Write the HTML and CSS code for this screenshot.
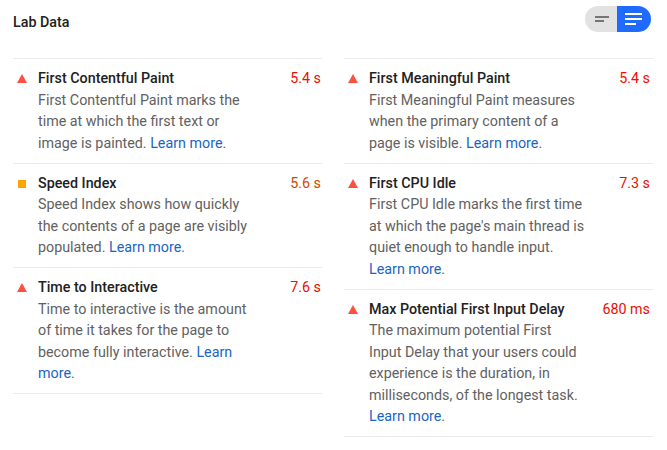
FILE: index.html
```html
<!DOCTYPE html>
<html>
<head>
<meta charset="utf-8">
<link rel="stylesheet" href="styles.css">
</head>
<body>
<div class="panel">
  <div class="header">
    <div class="title">Lab Data</div>
    <div class="toggle">
      <span class="tog tog-off">
        <svg width="14" height="10" viewBox="0 0 14 10"><rect x="0" y="2" width="14" height="2" fill="#757575"/><rect x="0" y="6" width="9" height="2" fill="#757575"/></svg>
      </span>
      <span class="tog tog-on">
        <svg width="17" height="12" viewBox="0 0 17 12"><rect x="0" y="0" width="17" height="2" fill="#fff"/><rect x="0" y="5" width="17" height="2" fill="#fff"/><rect x="0" y="10" width="11" height="2" fill="#fff"/></svg>
      </span>
    </div>
  </div>
  <div class="grid">
    <div class="col">
      <div class="metric">
        <span class="icon tri"></span>
        <div class="body">
          <div class="head"><span class="name">First Contentful Paint</span><span class="val fail">5.4 s</span></div>
          <div class="desc">First Contentful Paint marks the time at which the first text or image is painted. <a href="#">Learn more</a>.</div>
        </div>
      </div>
      <div class="metric">
        <span class="icon sq"></span>
        <div class="body">
          <div class="head"><span class="name">Speed Index</span><span class="val avg">5.6 s</span></div>
          <div class="desc">Speed Index shows how quickly the contents of a page are visibly populated. <a href="#">Learn more</a>.</div>
        </div>
      </div>
      <div class="metric">
        <span class="icon tri"></span>
        <div class="body">
          <div class="head"><span class="name">Time to Interactive</span><span class="val fail">7.6 s</span></div>
          <div class="desc">Time to interactive is the amount of time it takes for the page to become fully interactive. <a href="#">Learn more</a>.</div>
        </div>
      </div>
    </div>
    <div class="col">
      <div class="metric">
        <span class="icon tri"></span>
        <div class="body">
          <div class="head"><span class="name">First Meaningful Paint</span><span class="val fail">5.4 s</span></div>
          <div class="desc">First Meaningful Paint measures when the primary content of a page is visible. <a href="#">Learn more</a>.</div>
        </div>
      </div>
      <div class="metric">
        <span class="icon tri"></span>
        <div class="body">
          <div class="head"><span class="name">First CPU Idle</span><span class="val fail">7.3 s</span></div>
          <div class="desc">First CPU Idle marks the first time at which the page's main thread is quiet enough to handle input. <a href="#">Learn more</a>.</div>
        </div>
      </div>
      <div class="metric">
        <span class="icon tri"></span>
        <div class="body">
          <div class="head"><span class="name">Max Potential First Input Delay</span><span class="val fail">680 ms</span></div>
          <div class="desc">The maximum potential First Input Delay that your users could experience is the duration, in milliseconds, of the longest task. <a href="#">Learn more</a>.</div>
        </div>
      </div>
    </div>
  </div>
</div>
</body>
</html>
```

FILE: styles.css
```css
* { box-sizing: border-box; }
html, body { margin: 0; padding: 0; background: #fff; }
body { font-family: Roboto, "Noto Sans", sans-serif; color: #212121; }
.panel { padding: 5px 16px 0 13px; }
.header { display: flex; justify-content: space-between; align-items: center; height: 27px; margin-bottom: 26px; }
.header .title { font-size: 14.3px; font-weight: 500; color: #212121; padding-top: 7px; }
.toggle { display: flex; height: 26px; border-radius: 13px; overflow: hidden; margin-right: 0; }
.tog { display: flex; align-items: center; justify-content: center; height: 100%; }
.tog-off { width: 32px; background: #e2e2e2; padding-left: 2px; }
.tog-on { width: 34px; background: #1f6aff; padding-right: 2px; }
.grid { display: grid; grid-template-columns: 309px 309px; column-gap: 22px; }
.col { border-top: 1px solid #ebebeb; }
.metric { display: flex; border-bottom: 1px solid #ebebeb; padding: 9px 0 8.5px 4px; }
.icon { flex: none; }
.tri { width: 10px; height: 0; border-left: 5px solid transparent; border-right: 5px solid transparent; border-bottom: 9px solid #ff4e42; margin-top: 6px; margin-right: 11px; }
.sq { width: 8px; height: 8px; background: #ffa400; margin-top: 7px; margin-left: 1px; margin-right: 12px; }
.body { flex: 1; }
.head { display: flex; justify-content: space-between; font-size: 14.3px; line-height: 21.5px; padding-right: 1px; }
.col + .col .head { padding-right: 3px; }
.name { font-weight: 500; color: #212121; }
.val { font-weight: 400; }
.fail { color: #eb0f00; }
.avg { color: #d04900; }
.desc { font-size: 14.3px; line-height: 21.5px; color: #616161; max-width: 216px; }
.desc a { color: #1965c4; text-decoration: none; }
```
